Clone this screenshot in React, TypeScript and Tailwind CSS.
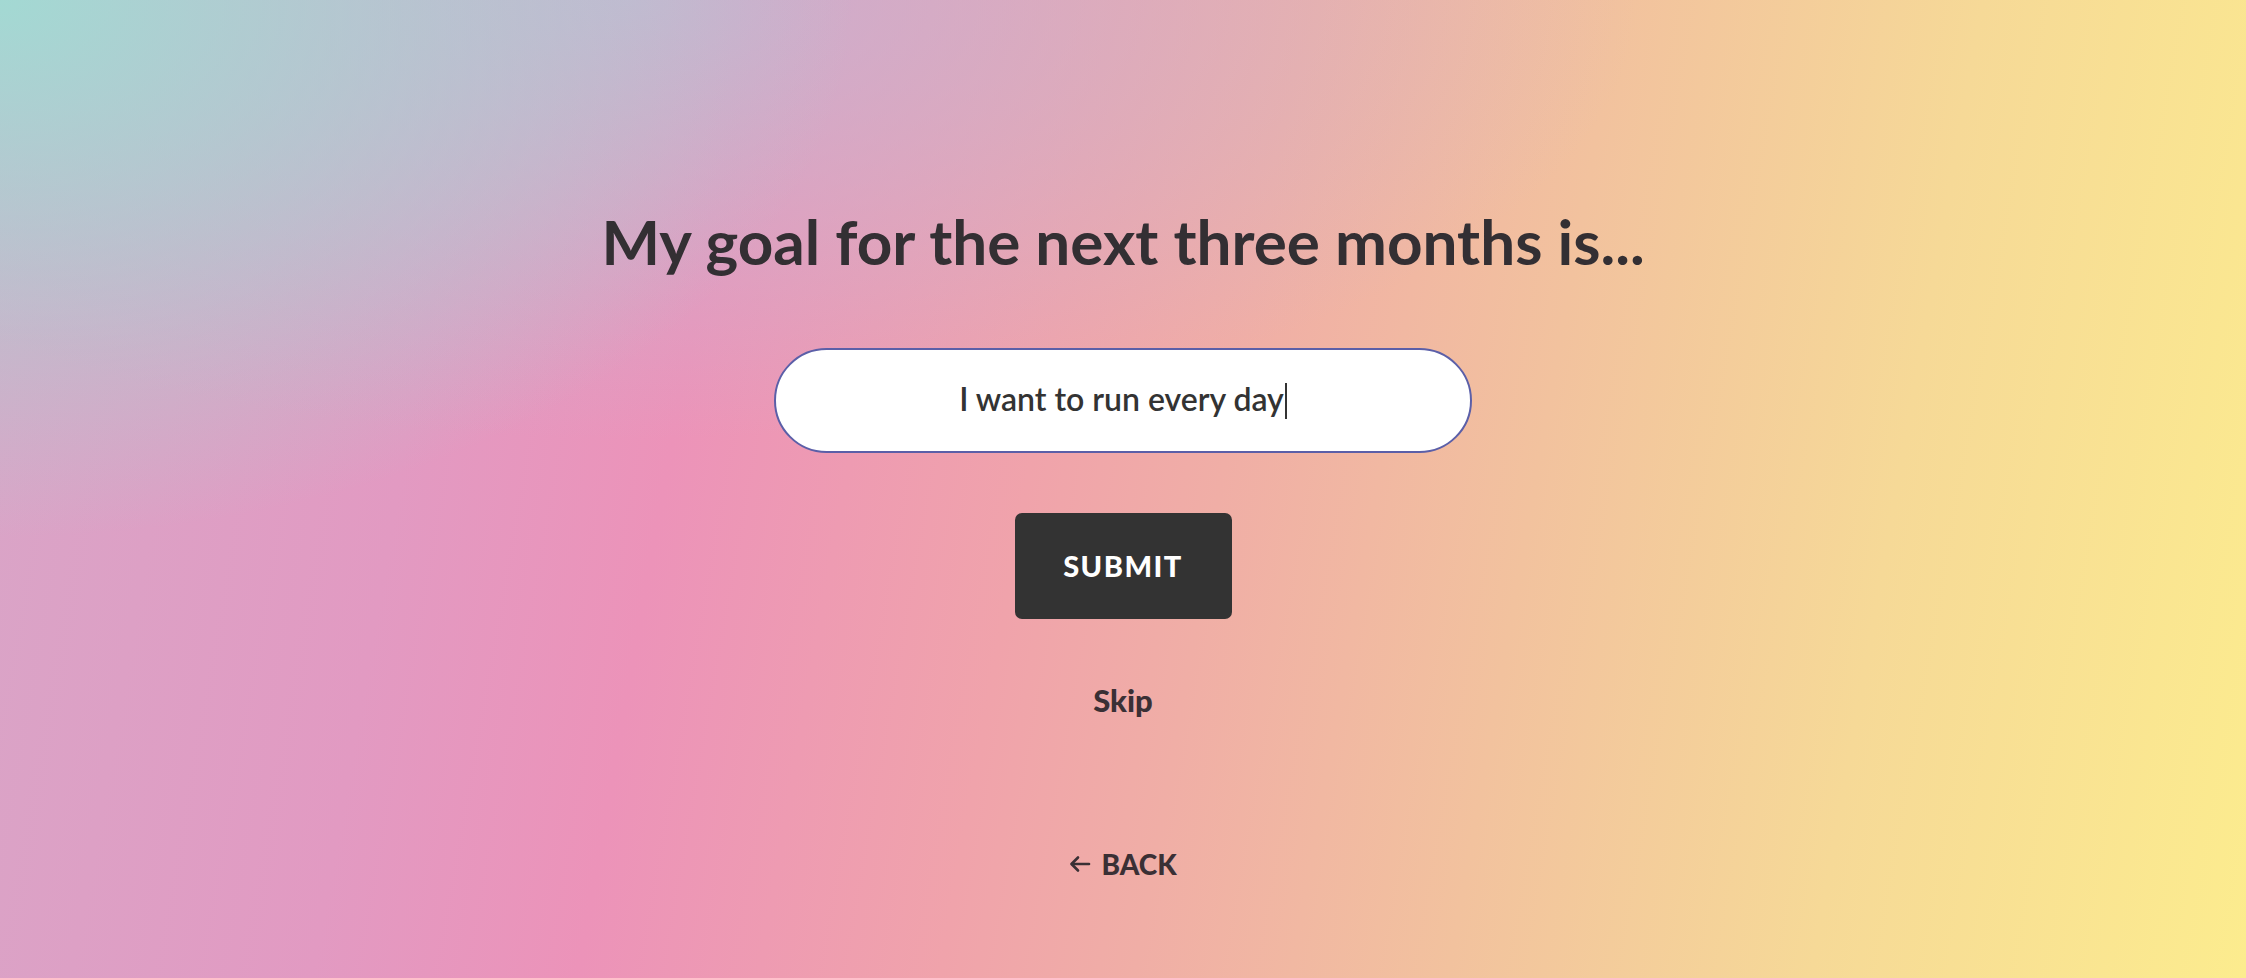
import React from "react";

export default function App() {
  return (
    <div
      className="w-full h-[978px] overflow-hidden flex flex-col items-center text-[#332f33] bg-[radial-gradient(ellipse_38%_55%_at_0%_0%,rgba(163,217,211,1)_0%,rgba(163,217,211,0.55)_45%,rgba(163,217,211,0)_100%),radial-gradient(ellipse_45%_45%_at_28%_0%,rgba(196,182,210,0.85)_0%,rgba(196,182,210,0)_100%),linear-gradient(100deg,#d8a6c8_0%,#e29ac2_20%,#ec93b9_31%,#f0a3ab_46%,#f0aea6_54%,#f2c29e_67%,#f6d997_82%,#fcec8e_100%)]"
      style={{ fontFamily: "Lato, 'Noto Sans', sans-serif" }}
    >
      <h1 className="mt-[205px] text-[62px] leading-[72px] font-bold tracking-[0px]">
        My goal for the next three months is...
      </h1>

      <div className="mt-[71px] w-[698px] h-[105px] rounded-full border-2 border-[#5b5fa8] bg-white flex items-center justify-center">
        <span className="text-[32px] font-semibold text-[#333] leading-none pb-[4px]">
          I want to run every day
        </span>
        <span className="w-[2px] h-[36px] bg-[#333] ml-[1px]" />
      </div>

      <button className="mt-[60px] w-[217px] h-[106px] rounded-[7px] bg-[#333333] text-white text-[29px] font-black tracking-[1.5px] flex items-center justify-center">
        SUBMIT
      </button>

      <div className="mt-[64px] h-[34px] leading-[34px] text-[31px] font-black text-[#3a3035]">
        Skip
      </div>

      <div className="mt-[130px] h-[34px] leading-[34px] text-[28px] font-black text-[#3a3035] flex items-center gap-[10px]">
        <svg width="22" height="18" viewBox="0 0 22 18" fill="none" stroke="#3a3035" strokeWidth="2.6" strokeLinecap="round" strokeLinejoin="round">
          <path d="M20 9H3" />
          <path d="M9 2.5L2.5 9L9 15.5" />
        </svg>
        <span>BACK</span>
      </div>
    </div>
  );
}
